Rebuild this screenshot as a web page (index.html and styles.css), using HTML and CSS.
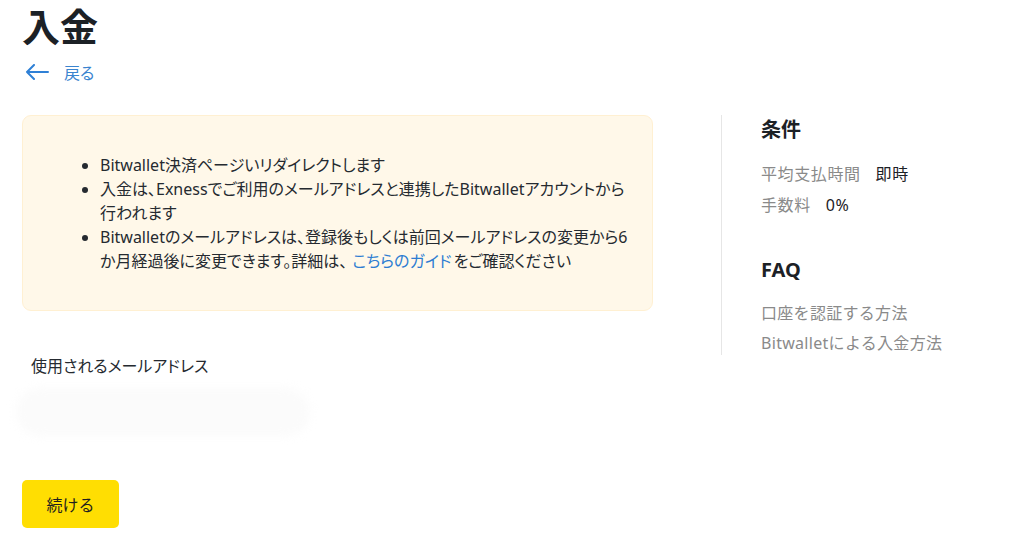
FILE: index.html
```html
<!DOCTYPE html>
<html lang="ja">
<head>
<meta charset="utf-8">
<title>入金</title>
<link rel="stylesheet" href="styles.css">
</head>
<body>
<div class="page">
  <h1 class="title">入金</h1>
  <a class="back" href="#">
    <svg class="back-icon" width="24" height="16" viewBox="0 0 24 16" aria-hidden="true">
      <path d="M23 8H2M9 1L2 8l7 7" fill="none" stroke="#2f80d6" stroke-width="2" stroke-linecap="round" stroke-linejoin="round"/>
    </svg>
    <span>戻る</span>
  </a>
  <div class="layout">
    <main class="main">
      <div class="notice">
        <ul class="notice-list">
          <li>Bitwallet決済ページいリダイレクトします</li>
          <li>入金は、Exnessでご利用のメールアドレスと連携したBitwalletアカウントから行われます</li>
          <li>Bitwalletのメールアドレスは、登録後もしくは前回メールアドレスの変更から6か月経過後に変更できます。詳細は、<a class="link" href="#">こちらのガイド</a>をご確認ください</li>
        </ul>
      </div>
      <div class="field-label">使用されるメールアドレス</div>
      <div class="skeleton"></div>
      <button class="btn" type="button">続ける</button>
    </main>
    <aside class="side">
      <h2 class="side-title">条件</h2>
      <div class="cond-row cond-first"><span class="cond-key">平均支払時間</span><span class="cond-val">即時</span></div>
      <div class="cond-row"><span class="cond-key">手数料</span><span class="cond-val">0%</span></div>
      <h2 class="side-title faq">FAQ</h2>
      <a class="faq-link faq-first" href="#">口座を認証する方法</a>
      <a class="faq-link" href="#">Bitwalletによる入金方法</a>
    </aside>
  </div>
</div>
</body>
</html>
```

FILE: styles.css
```css
html, body {
  margin: 0;
  padding: 0;
  background: #ffffff;
}
body {
  font-family: "Noto Sans", "Noto Sans CJK JP", sans-serif;
  color: #252a30;
  font-size: 16px;
  font-feature-settings: "palt";
}
.page {
  padding: 0 22px;
}
.title {
  margin: 0;
  font-size: 38px;
  line-height: 52px;
  font-weight: 700;
  color: #1c2126;
  font-feature-settings: normal;
}
.back {
  display: flex;
  align-items: center;
  gap: 15px;
  margin-top: 8px;
  height: 24px;
  padding-left: 3px;
  color: #3a84cf;
  text-decoration: none;
  font-size: 16px;
}
.back-icon {
  display: block;
}
.layout {
  display: flex;
  margin-top: 31px;
}
.main {
  width: 631px;
  flex: none;
}
.notice {
  box-sizing: border-box;
  background: #fff8e9;
  border: 1px solid #fff0d2;
  border-radius: 9px;
  padding: 37px 24px 37px 40px;
  min-height: 196px;
}
.notice-list {
  margin: 0;
  padding-left: 37px;
  line-height: 24px;
  max-width: 530px;
}
.link {
  color: #2d7dd2;
  text-decoration: none;
  margin: 0 2px 0 5px;
}
.field-label {
  margin-top: 43px;
  padding-left: 9px;
  line-height: 24px;
}
.skeleton {
  margin: 10px 0 0 -6px;
  width: 294px;
  height: 48px;
  border-radius: 24px;
  background: #fbfbfb;
  filter: blur(4px);
}
.btn {
  margin-top: 44px;
  display: block;
  width: 97px;
  height: 48px;
  border: none;
  border-radius: 5px;
  background: #ffde02;
  color: #1f1f1f;
  font-family: inherit;
  font-size: 16px;
  padding: 0;
  cursor: pointer;
}
.side {
  margin-left: 68px;
  border-left: 1px solid #e6e6e6;
  padding-left: 39px;
  height: 240px;
  font-feature-settings: normal;
}
.side-title {
  margin: 0;
  font-size: 20px;
  line-height: 30px;
  font-weight: 700;
  color: #1c2126;
}
.cond-row {
  display: flex;
  gap: 15px;
  line-height: 31px;
  letter-spacing: 0.6px;
}
.cond-first {
  margin-top: 14px;
}
.cond-key {
  color: #8a8a8a;
}
.cond-val {
  color: #1c2126;
}
.faq {
  margin-top: 34px;
}
.faq-link {
  display: block;
  color: #8a8a8a;
  text-decoration: none;
  line-height: 30px;
  letter-spacing: 0.3px;
}
.faq-first {
  margin-top: 13px;
}
```
